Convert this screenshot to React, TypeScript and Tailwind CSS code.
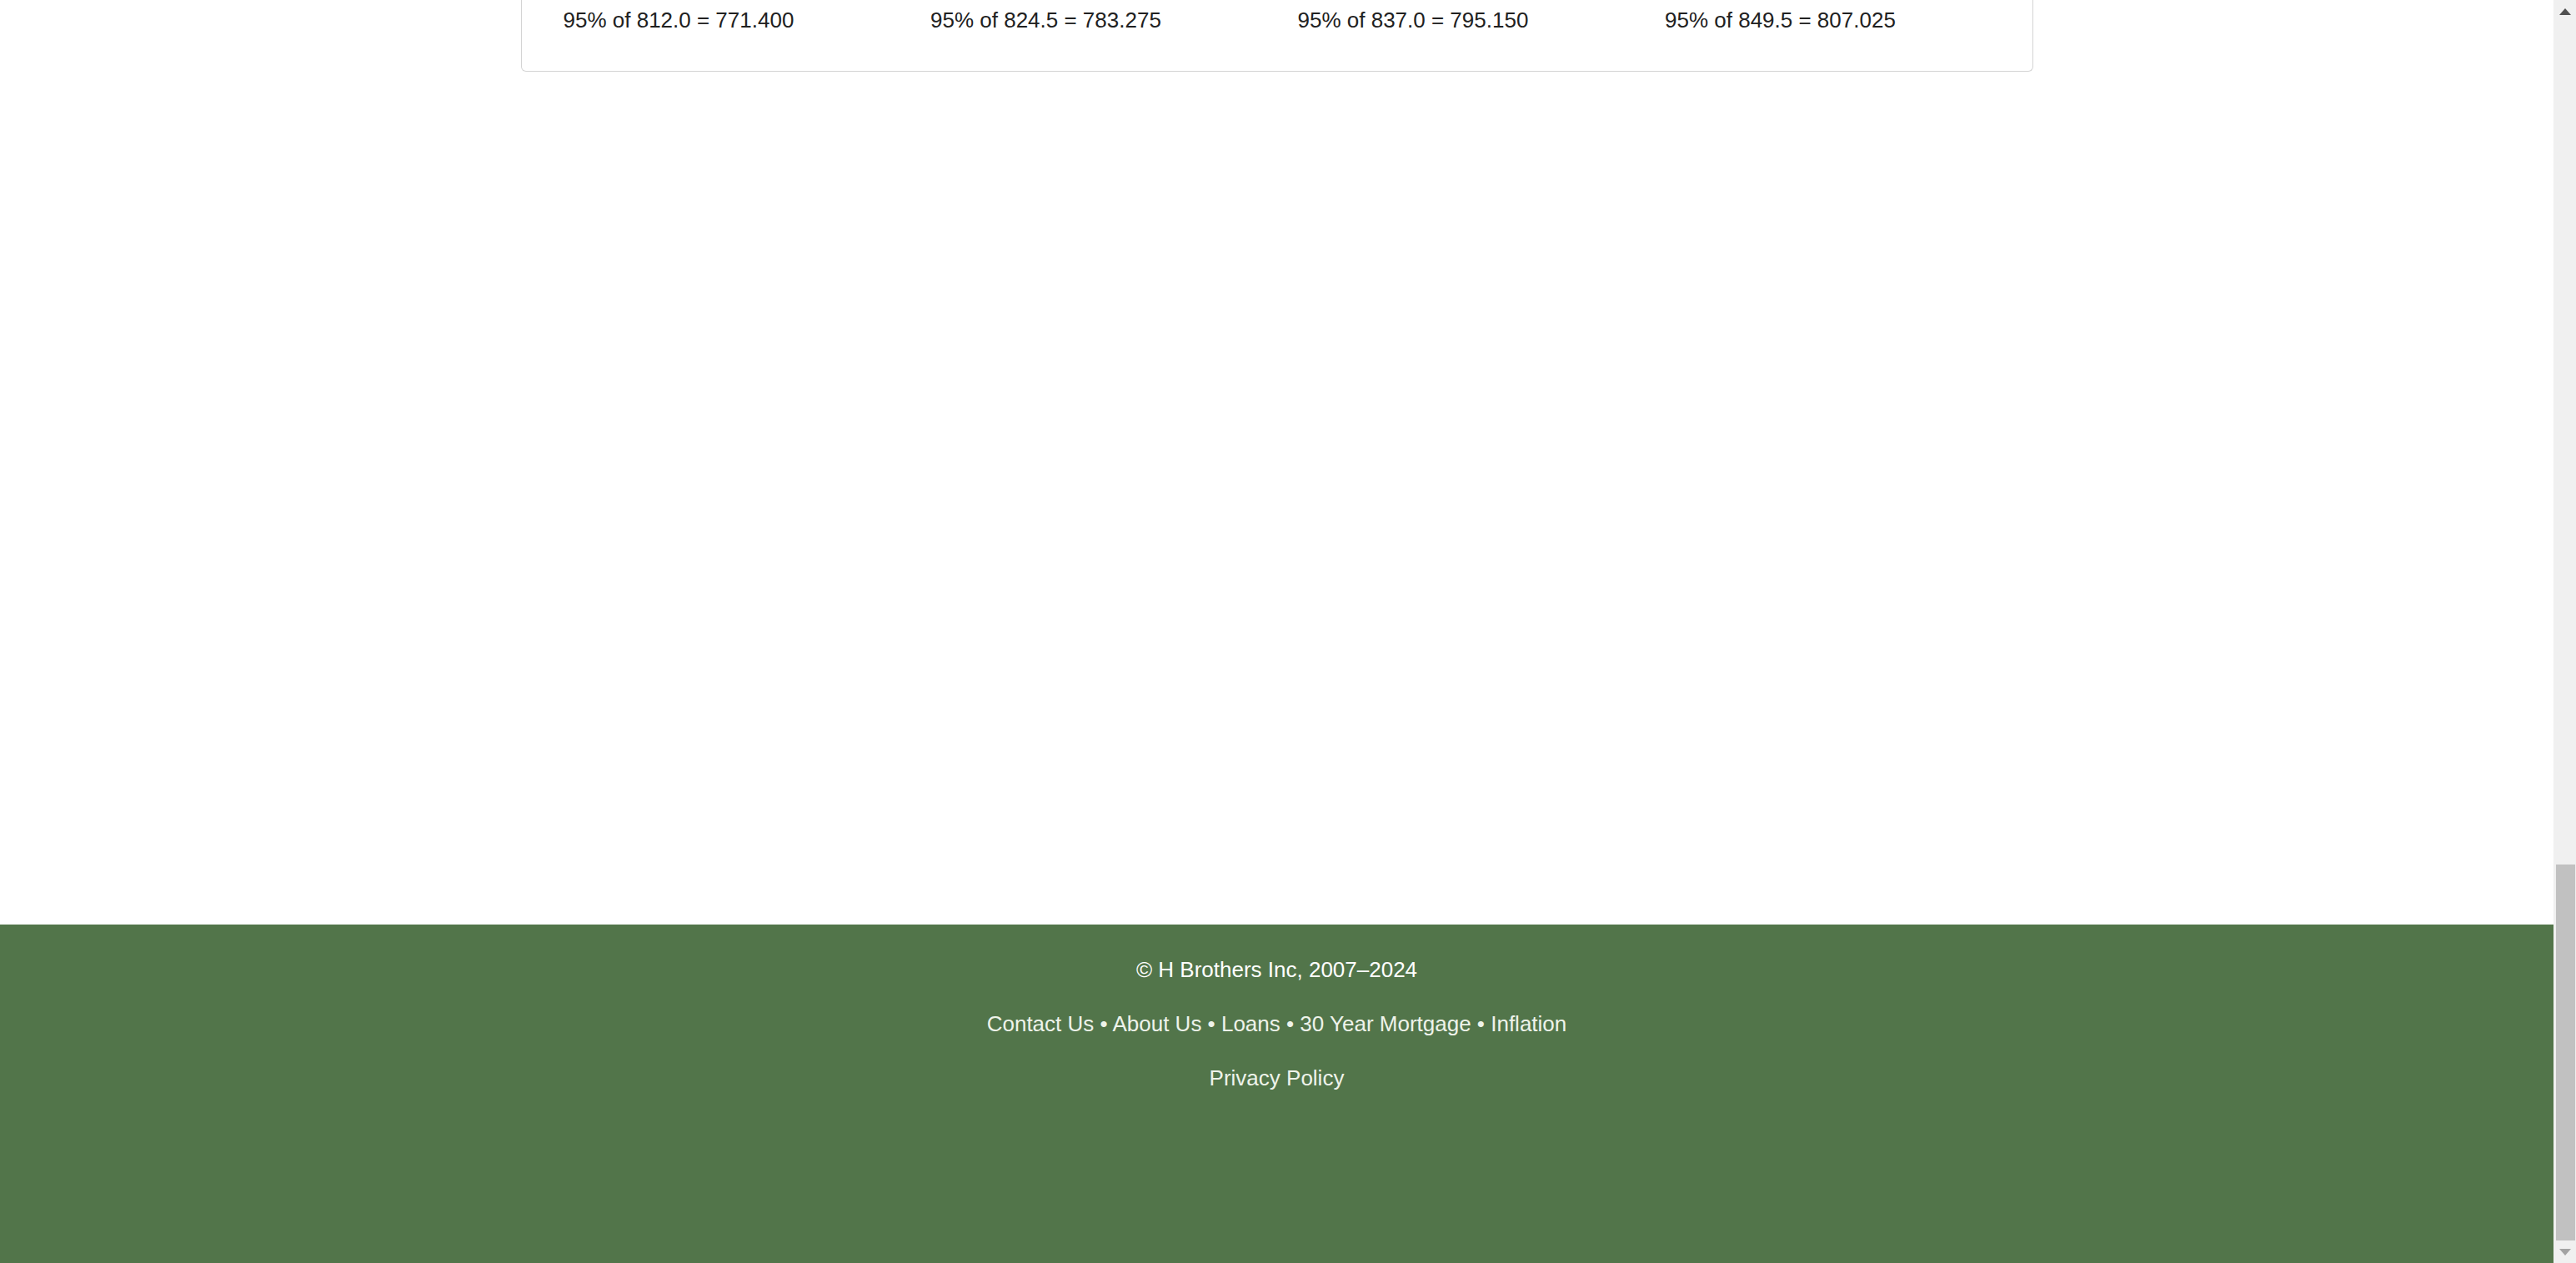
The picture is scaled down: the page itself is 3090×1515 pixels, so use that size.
const percents = [
  "95% of 812.0 = 771.400",
  "95% of 824.5 = 783.275",
  "95% of 837.0 = 795.150",
  "95% of 849.5 = 807.025",
];

const links = ["Contact Us", "About Us", "Loans", "30 Year Mortgage", "Inflation"];

function Scrollbar() {
  return (
    <div className="w-[27px] h-full bg-[#f0f0f0] flex flex-col items-center shrink-0">
      <div className="h-[30px] w-full flex items-center justify-center">
        <svg width="14" height="8" viewBox="0 0 14 8" className="mt-[-3px]">
          <polygon points="7,0 14,8 0,8" fill="#505050" />
        </svg>
      </div>
      <div className="flex-1" />
      <div className="w-[23px] h-[451px] bg-[#c1c1c1] ml-[2px]" />
      <div className="h-[27px] w-full flex items-center justify-center">
        <svg width="14" height="8" viewBox="0 0 14 8">
          <polygon points="0,0 14,0 7,8" fill="#a3a3a3" />
        </svg>
      </div>
    </div>
  );
}

export default function App() {
  return (
    <div className="flex w-[3090px] h-[1515px] overflow-hidden bg-white font-['Liberation_Sans',Arial,sans-serif]">
      <div className="flex-1 flex flex-col">
        <main className="flex-1">
          <div className="w-[1814px] mx-auto border-x border-b border-[#d4d4d4] rounded-b-[6px] px-[25px] pt-[9px] pb-[46px]">
            <div className="grid grid-cols-4">
              {percents.map((p) => (
                <div key={p} className="px-[25px] text-[26px] leading-[30px] text-[#212121]">
                  {p}
                </div>
              ))}
            </div>
          </div>
        </main>
        <footer className="h-[406px] bg-[#52754a] pt-[39px] flex flex-col items-center gap-[35px] text-[26px] leading-[30px]">
          <p className="text-white">© H Brothers Inc, 2007–2024</p>
          <p className="text-[#eef3ea]">
            {links.map((l, i) => (
              <span key={l}>
                <a href="#">{l}</a>
                {i < links.length - 1 ? " • " : ""}
              </span>
            ))}
          </p>
          <p className="text-[#eef3ea]">
            <a href="#">Privacy Policy</a>
          </p>
        </footer>
      </div>
      <Scrollbar />
    </div>
  );
}
